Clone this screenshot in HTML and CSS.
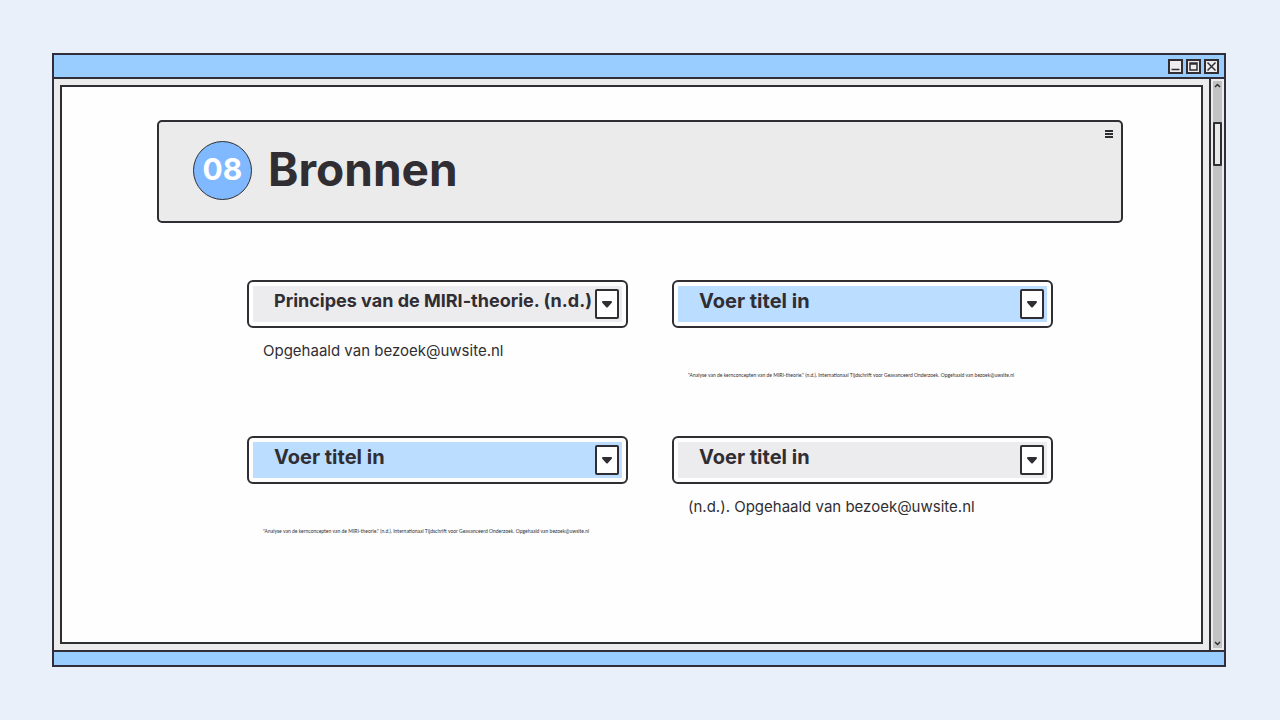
FILE: index.html
```html
<!DOCTYPE html>
<html lang="nl">
<head>
    <meta charset="UTF-8">
    <meta name="viewport" content="width=device-width, initial-scale=1.0">
    <title>Bronnen</title>
    <link rel="stylesheet" href="styles.css">
</head>
<body>
    <div class="window">
        <div class="titlebar">
            <button type="button" class="window-button" aria-label="Minimaliseren">
                <svg viewBox="0 0 15 15"><path d="M3.500 10.500h8"/></svg>
            </button>
            <button type="button" class="window-button" aria-label="Maximaliseren">
                <svg viewBox="0 0 15 15"><path d="M4 4h7v7H4zM4 5h7"/></svg>
            </button>
            <button type="button" class="window-button" aria-label="Sluiten">
                <svg viewBox="0 0 15 15"><path d="M3.500 3.500l8 8M11.500 3.500l-8 8"/></svg>
            </button>
        </div>

        <div class="window-body">
            <main class="page">
                <header class="page-header">
                    <span class="badge">08</span>
                    <h1>Bronnen</h1>
                    <button type="button" class="menu-button" aria-label="Menu">
                        <svg viewBox="0 0 8 8"><path d="M0 1h8M0 4h8M0 7h8"/></svg>
                    </button>
                </header>

                <div class="sources">
                    <section class="source">
                        <div class="source-bar">
                            <h2 class="long-title">Principes van de MIRI-theorie. (n.d.)</h2>
                            <button type="button" class="drop-button" aria-label="Uitklappen">
                                <svg viewBox="0 0 12 8"><path d="M2 2h8L6 6.500z"/></svg>
                            </button>
                        </div>
                        <p>Opgehaald van bezoek@uwsite.nl</p>
                    </section>
                    <section class="source">
                        <div class="source-bar blue">
                            <h2>Voer titel in</h2>
                            <button type="button" class="drop-button" aria-label="Uitklappen">
                                <svg viewBox="0 0 12 8"><path d="M2 2h8L6 6.500z"/></svg>
                            </button>
                        </div>
                        <p class="small">"Analyse van de kernconcepten van de MIRI-theorie." (n.d.). Internationaal Tijdschrift voor Geavanceerd Onderzoek. Opgehaald van bezoek@uwsite.nl</p>
                    </section>
                    <section class="source">
                        <div class="source-bar blue">
                            <h2>Voer titel in</h2>
                            <button type="button" class="drop-button" aria-label="Uitklappen">
                                <svg viewBox="0 0 12 8"><path d="M2 2h8L6 6.500z"/></svg>
                            </button>
                        </div>
                        <p class="small">"Analyse van de kernconcepten van de MIRI-theorie." (n.d.). Internationaal Tijdschrift voor Geavanceerd Onderzoek. Opgehaald van bezoek@uwsite.nl</p>
                    </section>
                    <section class="source">
                        <div class="source-bar">
                            <h2>Voer titel in</h2>
                            <button type="button" class="drop-button" aria-label="Uitklappen">
                                <svg viewBox="0 0 12 8"><path d="M2 2h8L6 6.500z"/></svg>
                            </button>
                        </div>
                        <p>(n.d.). Opgehaald van bezoek@uwsite.nl</p>
                    </section>
                </div>
            </main>

            <div class="scrollbar">
                <button type="button" class="scroll-button" aria-label="Omhoog">
                    <svg viewBox="0 0 9 9"><path d="M2 6l2.500-2.500L7 6"/></svg>
                </button>
                <div class="scroll-thumb"></div>
                <button type="button" class="scroll-button scroll-down" aria-label="Omlaag">
                    <svg viewBox="0 0 9 9"><path d="M2 3l2.500 2.500L7 3"/></svg>
                </button>
            </div>
        </div>

        <div class="statusbar"></div>
    </div>
</body>
</html>
```

FILE: styles.css
```css
* {
    box-sizing: border-box;
}

body {
    display: flex;
    min-height: 100vh;
    margin: 0;
    padding: 53px 54px 53px 52px;
    background-color: #e9f0f9;
    color: #302e32;
    font-family: Inter, "Open Sans", sans-serif;
}

button {
    display: flex;
    align-items: center;
    justify-content: center;
    padding: 0;
    border: none;
    background: none;
    cursor: pointer;
}

svg {
    display: block;
    fill: none;
    stroke: #302e32;
}

.window {
    display: flex;
    flex: 1;
    flex-direction: column;
    min-width: 0;
    border: 2px solid #302e3a;
    background-color: #ecebeb;
}

.titlebar {
    display: flex;
    align-items: center;
    justify-content: flex-end;
    gap: 3px;
    height: 24px;
    padding-right: 5px;
    border-bottom: 2px solid #302e3a;
    background-color: #99ccff;
}

.window-button {
    width: 15px;
    height: 15px;
    border: 2px solid #302e32;
    background-color: #eeecec;
}

.window-button svg {
    flex: none;
    width: 15px;
    height: 15px;
    stroke-width: 1.500;
}

.window-body {
    display: flex;
    flex: 1;
}

.page {
    flex: 1;
    min-width: 0;
    margin: 6px;
    padding: 33px 78px 33px 95px;
    border: 2px solid #302e32;
    background-color: #fefefe;
}

.page-header {
    display: flex;
    align-items: center;
    gap: 16px;
    height: 103px;
    padding: 0 8px 2px 34px;
    border: 2px solid #302e32;
    border-radius: 5px;
    background-color: #ecebeb;
}

.badge {
    display: flex;
    justify-content: center;
    width: 59px;
    height: 59px;
    padding-top: 7px;
    border: 1px solid #302e32;
    border-radius: 50%;
    background-color: #80b9ff;
    color: #ffffff;
    font-size: 30px;
    font-weight: 700;
    line-height: 40px;
}

h1 {
    flex: 1;
    margin: 0;
    padding-bottom: 4px;
    font-size: 46px;
    font-weight: 700;
    line-height: 56px;
}

.menu-button {
    align-self: flex-start;
    margin-top: 8px;
}

.menu-button svg {
    width: 8px;
    height: 8px;
    stroke-width: 2;
}

.sources {
    display: grid;
    grid-template-columns: 1fr 1fr;
    gap: 44px;
    padding: 57px 70px 0 90px;
}

.source {
    min-width: 0;
    min-height: 112px;
}

.source-bar {
    display: flex;
    align-items: center;
    justify-content: space-between;
    height: 48px;
    padding: 0 7px 0 25px;
    border: 2px solid #302e32;
    border-radius: 6px;
    background-color: #ecebed;
    box-shadow: inset 0 0 0 4px #fefefe;
}

.source-bar.blue {
    background-color: #bbddff;
}

h2 {
    margin: 0;
    padding-bottom: 6px;
    font-size: 20px;
    font-weight: 700;
    line-height: 24px;
    white-space: nowrap;
}

.long-title {
    font-size: 18px;
}

.drop-button {
    flex: none;
    width: 24px;
    height: 30px;
    border: 2px solid #302e32;
    border-radius: 2px;
    background-color: #ffffff;
}

.drop-button svg {
    width: 12px;
    height: 8px;
    fill: #302e32;
    stroke-width: 2;
    stroke-linejoin: round;
}

.source p {
    margin: 13px 16px 0;
    font-size: 15px;
    line-height: 20px;
}

.source .small {
    margin-top: 44px;
    font-family: Lato, sans-serif;
    font-size: 5px;
    line-height: 6px;
    white-space: nowrap;
}

.scrollbar {
    display: flex;
    flex-direction: column;
    width: 15px;
    padding: 2px;
    border-left: 2px solid #302e32;
    background-color: #ecebeb;
    background-image: linear-gradient(#c2c2c4, #c2c2c4);
    background-origin: content-box;
    background-repeat: no-repeat;
}

.scroll-button svg {
    width: 9px;
    height: 9px;
    stroke-width: 1.500;
}

.scroll-thumb {
    height: 44px;
    margin-top: 32px;
    border: 2px solid #302e32;
    border-radius: 1px;
    background-color: #e8e8e8;
}

.scroll-down {
    margin-top: auto;
}

.statusbar {
    height: 15px;
    border-top: 2px solid #302e3a;
    background-color: #99ccff;
}
```
